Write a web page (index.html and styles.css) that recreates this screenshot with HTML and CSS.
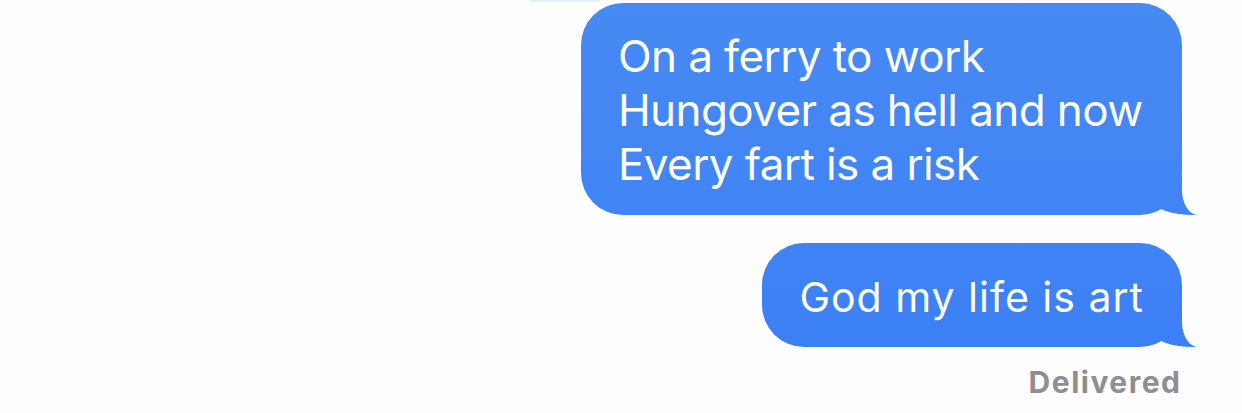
FILE: index.html
```html
<!DOCTYPE html>
<html lang="en">
  <head>
    <meta charset="UTF-8" />
    <title>Messages</title>
    <link rel="stylesheet" href="styles.css">
  </head>
  <body>
    <div class="top-edge"></div>
    <div class="thread">
      <div class="bubble big">
        On a ferry to work<br />
        Hungover as hell and now<br />
        Every fart is a risk
      </div>
      <div class="bubble small">God my life is art</div>
      <div class="status">Delivered</div>
    </div>
  </body>
</html>
```

FILE: styles.css
```css
:root {
  --blue-top: #488af3;
  --blue-bottom: #3a7ef6;
  --paper: #fefefe;
}

body {
  margin: 0;
  background: var(--paper);
  font-family: Inter, Roboto, sans-serif;
  overflow: hidden;
}

.top-edge {
  position: absolute;
  top: 0;
  left: 530px;
  width: 70px;
  height: 2px;
  background: #e3f1fb;
}

.thread {
  display: flex;
  flex-direction: column;
  align-items: flex-end;
  padding: 3px 60px 0 0;
}

.bubble {
  position: relative;
  color: #fff;
  white-space: nowrap;
  background: linear-gradient(var(--blue-top), var(--blue-bottom)) fixed;
  border-radius: 42px;
}

/* tail */
.bubble::before {
  content: "";
  position: absolute;
  right: -16px;
  bottom: 0;
  width: 44px;
  height: 40px;
  background: linear-gradient(var(--blue-top), var(--blue-bottom)) fixed;
  border-bottom-left-radius: 40px 14px;
}

.bubble::after {
  content: "";
  position: absolute;
  right: -40px;
  bottom: 0;
  width: 40px;
  height: 44px;
  background: var(--paper);
  border-bottom-left-radius: 16px 25px;
}

.big {
  width: 526px;
  padding: 26px 38px 24px 37px;
  font-size: 44px;
  line-height: 54px;
  letter-spacing: -0.6px;
}

.small {
  margin-top: 28px;
  padding: 26px 38px 22px 37px;
  font-size: 41px;
  line-height: 56px;
  letter-spacing: 1px;
}

.status {
  margin-top: 17px;
  margin-right: 0.5px;
  color: #8e8e93;
  font-size: 30px;
  line-height: 36px;
  font-weight: 700;
  letter-spacing: 1.5px;
}
```
